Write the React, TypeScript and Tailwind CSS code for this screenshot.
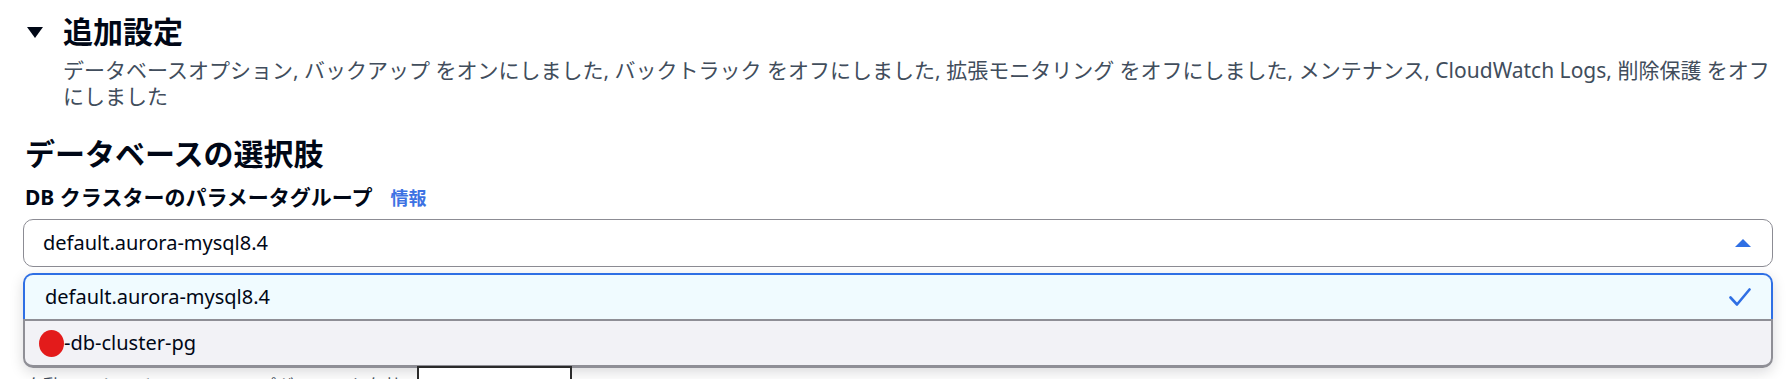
import React from "react";

export default function App() {
  return (
    <div className="relative w-[1789px] h-[379px] overflow-hidden bg-white text-[#000716] font-['Noto_Sans','Noto_Sans_CJK_JP',sans-serif]">
      <div className="pt-[14px]">
        {/* Header */}
        <div className="flex items-center pl-[27px] gap-[20px]">
          <svg width="16" height="11" viewBox="0 0 16 11" className="shrink-0">
            <polygon points="0,0 16,0 8,11" fill="#000716" />
          </svg>
          <div className="text-[30px] leading-[36px] font-bold">追加設定</div>
        </div>
        <div className="pl-[63px] mt-[7px] text-[21px] leading-[26px] text-[#414d5c] whitespace-nowrap">
          <div>
            データベースオプション, バックアップ をオンにしました, バックトラック をオフにしました, 拡張モニタリング をオフにしました, メンテナンス, CloudWatch Logs, 削除保護 をオフ
          </div>
          <div>にしました</div>
        </div>

        {/* Section */}
        <div className="pl-[23px] pr-[16px]">
          <div className="mt-[28px] pl-[2px] text-[30px] leading-[34px] font-bold">データベースの選択肢</div>
          <div className="mt-[13px] pl-[2px] flex items-baseline gap-[18px]">
            <span className="text-[21px] leading-[26px] font-bold">DB クラスターのパラメータグループ</span>
            <span className="text-[18px] leading-[26px] font-bold text-[#3d72e3]">情報</span>
          </div>

          <div className="relative mt-[8px]">
            <div className="h-[48px] w-[1750px] rounded-[10px] border border-[#8c8c94] bg-white flex items-center justify-between pl-[19px] pr-[21px]">
              <span className="text-[20px]">default.aurora-mysql8.4</span>
              <svg width="16" height="8" viewBox="0 0 16 8">
                <polygon points="8,0 16,8 0,8" fill="#2f6fe4" />
              </svg>
            </div>

            {/* Dropdown overlay */}
            <div className="absolute left-0 top-[54px] w-[1750px] rounded-[10px] shadow-[0_4px_14px_rgba(0,7,22,0.15)] z-10">
              <div className="h-[46px] rounded-t-[10px] border-2 border-b-0 border-[#2f6fe4] bg-[#f0fbff] flex items-center justify-between pl-[20px] pr-[20px]">
                <span className="text-[20px]">default.aurora-mysql8.4</span>
                <svg width="22" height="20" viewBox="0 0 22 20" fill="none">
                  <path d="M1.5 10.5 L8 17.5 L20.5 2.5" stroke="#2f6fe4" strokeWidth="2.6" strokeLinecap="round" strokeLinejoin="round" />
                </svg>
              </div>
              <div className="h-[49px] rounded-b-[10px] border-2 border-b-[3px] border-[#8f8f96] bg-[#f2f2f6] flex items-center pl-[14px]">
                <span className="inline-block w-[25px] h-[27px] rounded-[50%] bg-[#e31b1b] shrink-0" />
                <span className="text-[20px]">-db-cluster-pg</span>
              </div>
            </div>
          </div>

          <div className="mt-[107px] pl-[2px] text-[18px] leading-[24px] text-[#414d5c] whitespace-nowrap">
            自動マイナーバージョンアップグレードを有効にする
          </div>
        </div>
      </div>

      {/* Overlapping box at the bottom */}
      <div className="absolute left-[417px] top-[366px] w-[155px] h-[40px] border-2 border-[#2b2b2b] bg-white z-20" />
    </div>
  );
}
